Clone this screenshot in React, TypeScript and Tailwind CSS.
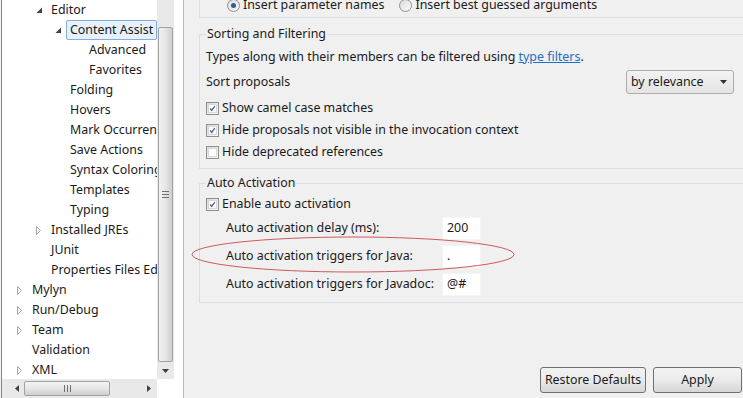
import React from "react";

type Node = { label: string; level: number; state?: "open" | "closed"; selected?: boolean };

const treeItems: Node[] = [
  { label: "Editor", level: 1, state: "open" },
  { label: "Content Assist", level: 2, state: "open", selected: true },
  { label: "Advanced", level: 3 },
  { label: "Favorites", level: 3 },
  { label: "Folding", level: 2 },
  { label: "Hovers", level: 2 },
  { label: "Mark Occurrences", level: 2 },
  { label: "Save Actions", level: 2 },
  { label: "Syntax Coloring", level: 2 },
  { label: "Templates", level: 2 },
  { label: "Typing", level: 2 },
  { label: "Installed JREs", level: 1, state: "closed" },
  { label: "JUnit", level: 1 },
  { label: "Properties Files Editor", level: 1 },
  { label: "Mylyn", level: 0, state: "closed" },
  { label: "Run/Debug", level: 0, state: "closed" },
  { label: "Team", level: 0, state: "closed" },
  { label: "Validation", level: 0 },
  { label: "XML", level: 0, state: "closed" },
];

const indent = ["pl-[11px]", "pl-[30px]", "pl-[49px]", "pl-[68px]"];

const Twisty = ({ state }: { state?: "open" | "closed" }) => {
  if (state === "open")
    return (
      <svg width="7" height="7" viewBox="0 0 7 7" className="mt-[1px]">
        <polygon points="6,0.5 6,6 0.5,6" fill="#404040" />
      </svg>
    );
  if (state === "closed")
    return (
      <svg width="7" height="9" viewBox="0 0 7 9">
        <polygon points="0.5,0.5 4.5,4.5 0.5,8.5" fill="none" stroke="#a6a6a6" />
      </svg>
    );
  return null;
};

const Checkbox = ({ checked }: { checked?: boolean }) => (
  <span className="w-[13px] h-[13px] border border-[#8e8f8f] bg-gradient-to-br from-[#dcdcdc] to-[#fafafa] flex items-center justify-center shrink-0">
    <span className="w-[9px] h-[9px] border border-[#d8d8d8] bg-white flex items-center justify-center">
      {checked && (
        <svg width="9" height="9" viewBox="0 0 9 9">
          <path d="M1.5 4.5 L3.5 7 L7.5 1.5" fill="none" stroke="#4a5e96" strokeWidth="1.6" />
        </svg>
      )}
    </span>
  </span>
);

const Radio = ({ checked }: { checked?: boolean }) => (
  <span className="w-[13px] h-[13px] rounded-full border border-[#8e8f8f] bg-gradient-to-br from-[#dcdcdc] to-[#fafafa] flex items-center justify-center shrink-0">
    {checked && <span className="w-[5px] h-[5px] rounded-full bg-[#2f5a9a]" />}
  </span>
);

const Tree = () => (
  <div className="w-[184px] h-full flex shrink-0 pl-[1px] bg-[#f0f0f0]">
    <div className="flex-1 min-w-0 flex flex-col border-l border-[#828790] border-r border-r-[#b9b9b9] bg-white">
      <div className="flex-1 flex min-h-0">
        <div className="flex-1 min-w-0 overflow-hidden">
          {treeItems.map((item) => (
            <div key={item.label} className={`h-[20px] flex items-center whitespace-nowrap ${indent[item.level]}`}>
              <span className="w-[15px] flex items-center pl-[4px] shrink-0">
                <Twisty state={item.state} />
              </span>
              <span
                className={`h-[20px] flex items-center px-[3px] border rounded-[2px] ${
                  item.selected ? "bg-[#e6f1fc] border-[#84acdd]" : "border-transparent"
                }`}
              >
                {item.label}
              </span>
            </div>
          ))}
        </div>
        {/* vertical scrollbar */}
        <div className="w-[17px] shrink-0 bg-[#e9e9e9] flex flex-col items-center">
          <div className="mt-[27px] w-[15px] h-[335px] rounded-[2px] border border-[#a2a2a2] bg-gradient-to-r from-[#f3f3f3] via-[#e6e6e6] to-[#cfcfcf] flex items-center justify-center">
            <div className="flex flex-col gap-[2px]">
              <span className="w-[7px] h-px bg-[#6f6f6f]" />
              <span className="w-[7px] h-px bg-[#6f6f6f]" />
              <span className="w-[7px] h-px bg-[#6f6f6f]" />
            </div>
          </div>
          <div className="flex-1 flex items-center justify-center">
            <svg width="7" height="4" viewBox="0 0 7 4">
              <polygon points="0,0 7,0 3.5,4" fill="#404040" />
            </svg>
          </div>
        </div>
        <div className="w-[9px] shrink-0" />
      </div>
      {/* horizontal scrollbar */}
      <div className="h-[19px] flex shrink-0">
        <div className="flex-1 bg-[#e9e9e9] flex items-center">
          <span className="w-[21px] flex justify-center pl-[8px]">
            <svg width="4" height="7" viewBox="0 0 4 7">
              <polygon points="4,0 4,7 0,3.5" fill="#404040" />
            </svg>
          </span>
          <div className="ml-[1px] w-[86px] h-[15px] rounded-[2px] border border-[#a2a2a2] bg-gradient-to-b from-[#f3f3f3] via-[#e6e6e6] to-[#cfcfcf] flex items-center justify-center gap-[2px]">
            <span className="w-px h-[7px] bg-[#6f6f6f]" />
            <span className="w-px h-[7px] bg-[#6f6f6f]" />
            <span className="w-px h-[7px] bg-[#6f6f6f]" />
          </div>
          <span className="flex-1 flex justify-end pr-[6px]">
            <svg width="4" height="7" viewBox="0 0 4 7">
              <polygon points="0,0 0,7 4,3.5" fill="#404040" />
            </svg>
          </span>
        </div>
        <div className="w-[26px] bg-white" />
      </div>
    </div>
  </div>
);

const Content = () => (
  <div className="flex-1 h-full flex flex-col overflow-hidden">
    {/* parameter group (top cut off) */}
    <div className="ml-[15px] w-[570px] h-[28px] -mt-[10px] border border-[#d5dfe5] pt-[2px] pl-[27px] flex items-center gap-[15px]">
      <label className="flex items-center gap-[3px] h-[20px]">
        <Radio checked />
        <span>Insert parameter names</span>
      </label>
      <label className="flex items-center gap-[3px] h-[20px]">
        <Radio />
        <span>Insert best guessed arguments</span>
      </label>
    </div>

    <fieldset className="ml-[15px] w-[570px] mt-[8px] border border-[#d5dfe5] pl-[6px] pb-[5px]">
      <legend className="h-[16px] leading-[16px] px-[1px]">Sorting and Filtering</legend>
      <div className="pt-[5px] h-[25px] flex items-center">
        Types along with their members can be filtered using&nbsp;
        <span className="text-[#1f6fc5] underline">type filters</span>.
      </div>
      <div className="mt-[3px] h-[24px] flex items-center justify-between pr-[34px]">
        <span>Sort proposals</span>
        <div className="w-[108px] h-[24px] rounded-[3px] border border-[#acacac] bg-gradient-to-b from-[#f2f2f2] to-[#e5e5e5] flex items-center justify-between pl-[4px] pr-[6px]">
          <span>by relevance</span>
          <svg width="7" height="4" viewBox="0 0 7 4">
            <polygon points="0,0 7,0 3.5,4" fill="#303030" />
          </svg>
        </div>
      </div>
      <div className="mt-[3px] flex flex-col">
        <label className="h-[22px] flex items-center gap-[3px]">
          <Checkbox checked />
          <span>Show camel case matches</span>
        </label>
        <label className="h-[22px] flex items-center gap-[3px]">
          <Checkbox checked />
          <span>Hide proposals not visible in the invocation context</span>
        </label>
        <label className="h-[22px] flex items-center gap-[3px]">
          <Checkbox />
          <span>Hide deprecated references</span>
        </label>
      </div>
    </fieldset>

    <fieldset className="ml-[15px] w-[570px] mt-[6px] border border-[#d5dfe5] pl-[6px] pb-[6px]">
      <legend className="h-[16px] leading-[16px] px-[1px]">Auto Activation</legend>
      <label className="mt-[2px] h-[22px] flex items-center gap-[3px]">
        <Checkbox checked />
        <span>Enable auto activation</span>
      </label>
      <div className="pl-[20px] flex flex-col gap-[5px] mt-[2px]">
        {[
          ["Auto activation delay (ms):", "200"],
          ["Auto activation triggers for Java:", "."],
          ["Auto activation triggers for Javadoc:", "@#"],
        ].map(([label, value]) => (
          <div key={label} className="h-[23px] flex items-center">
            <span className="w-[216px] whitespace-nowrap">{label}</span>
            <span className="w-[39px] h-[23px] bg-white border border-[#f4f4f4] flex items-center px-[4px]">{value}</span>
          </div>
        ))}
      </div>
    </fieldset>

    <div className="flex-1" />
    <div className="flex justify-end gap-[7px] pr-[1px] pb-[5px]">
      <button className="w-[106px] h-[26px] rounded-[3px] border border-[#707070] bg-gradient-to-b from-[#f2f2f2] via-[#ebebeb] to-[#d6d6d6]">
        Restore Defaults
      </button>
      <button className="w-[89px] h-[26px] rounded-[3px] border border-[#707070] bg-gradient-to-b from-[#f2f2f2] via-[#ebebeb] to-[#d6d6d6]">
        Apply
      </button>
    </div>
  </div>
);

export default function App() {
  return (
    <div className="relative w-[743px] h-[398px] overflow-hidden flex bg-[#f0f0f0] text-[12.4px] text-[#1a1a1a] font-['Noto_Sans',sans-serif]">
      <Tree />
      <Content />
      {/* red annotation ellipse */}
      <svg className="absolute left-0 top-0 pointer-events-none" width="743" height="398">
        <ellipse cx="353" cy="254.5" rx="161" ry="17.5" fill="none" stroke="#d0595c" strokeWidth="1" />
      </svg>
    </div>
  );
}
